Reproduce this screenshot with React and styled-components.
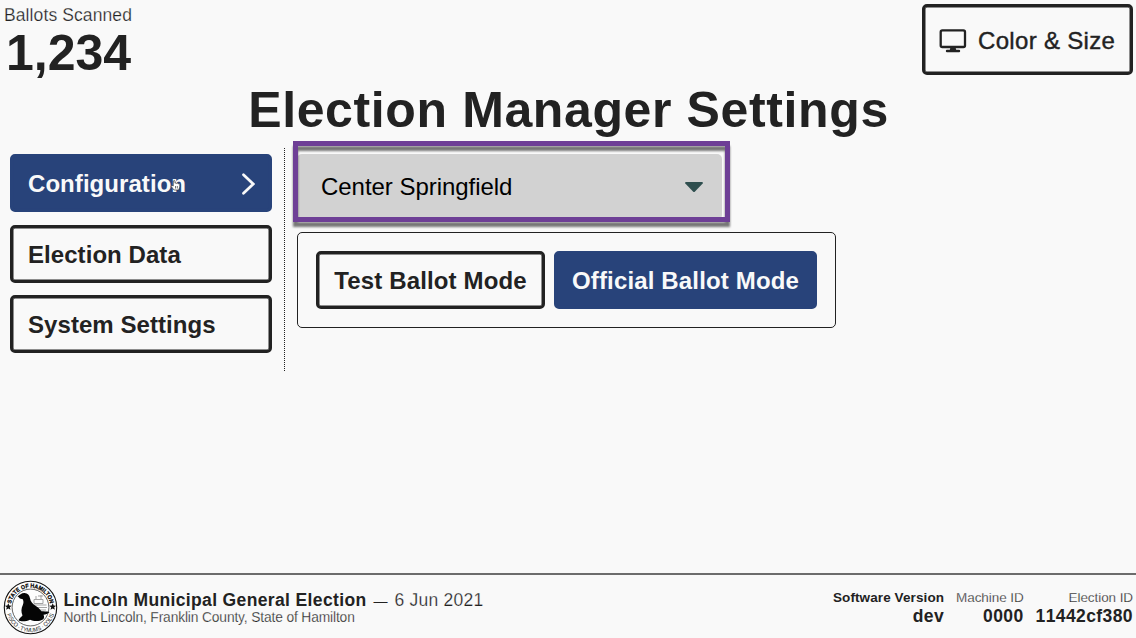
import React from "react";
import styled, { createGlobalStyle, css } from "styled-components";

const ink = "#222222";
const paper = "#f9f9f9";
const blue = "#28437a";

const GlobalStyle = createGlobalStyle`
  * { box-sizing: border-box; }
  body {
    margin: 0;
    background: ${paper};
    color: ${ink};
    font-family: "Liberation Sans", Arial, sans-serif;
    overflow: hidden;
  }
  svg { display: block; flex: none; }
`;

/* Thins the regular face so it reads as a light weight. */
const light = css`
  font-weight: 400;
  -webkit-text-stroke: 0.25px ${paper};
`;

const Screen = styled.div`
  display: flex;
  flex-direction: column;
  width: 1136px;
  height: 638px;
`;

const Header = styled.header`
  display: flex;
  justify-content: space-between;
  align-items: flex-start;
  height: 82px;
  padding: 4px 3px 0 4px;
`;

const Counter = styled.div`
  display: flex;
  flex-direction: column;
`;

const CounterLabel = styled.span`
  ${light}
  font-size: 17.5px;
  line-height: 22px;
  letter-spacing: 0.1px;
`;

const CounterValue = styled.span`
  padding-left: 2px;
  font-size: 50px;
  font-weight: 700;
  line-height: 54px;
  font-kerning: none;
`;

const ThemeButton = styled.button`
  display: flex;
  align-items: center;
  gap: 11px;
  width: 211px;
  height: 71px;
  padding: 2px 0 0 14px;
  border: 3px solid ${ink};
  border-radius: 5px;
  box-shadow: inset 0 0 0 0.5px ${ink};
  background: ${paper};
  color: ${ink};
  font: 400 24px "Liberation Sans", Arial, sans-serif;
  letter-spacing: 0.32px;
  -webkit-text-stroke: 0.4px ${ink};
  white-space: nowrap;
`;

const Title = styled.h1`
  margin: 0;
  padding-left: 1px;
  height: 66px;
  text-align: center;
  font-size: 50px;
  line-height: 56px;
  font-weight: 700;
  letter-spacing: 0.62px;
`;

const Main = styled.main`
  display: flex;
  align-items: flex-start;
  flex: 1;
  padding-left: 10px;
`;

const Nav = styled.nav`
  display: flex;
  flex-direction: column;
  gap: 12.4px;
  width: 275px;
  height: 223px;
  padding: 6.2px 12px 0 0;
  border-right: 1px dotted ${ink};
`;

const Button = styled.button`
  display: flex;
  align-items: center;
  justify-content: ${(p) => (p.$spread ? "space-between" : "center")};
  width: ${(p) => p.$width}px;
  height: 58px;
  padding: ${(p) => (p.$spread ? "2px 14px 0 15px" : "2px 0 0")};
  border: 3px solid ${(p) => (p.$primary ? blue : ink)};
  border-radius: 5px;
  box-shadow: inset 0 0 0 0.5px ${(p) => (p.$primary ? blue : ink)};
  background: ${(p) => (p.$primary ? blue : paper)};
  color: ${(p) => (p.$primary ? paper : ink)};
  font: 700 24px "Liberation Sans", Arial, sans-serif;
  letter-spacing: ${(p) => (p.$spread ? 0.06 : 0.15)}px;
  white-space: nowrap;
`;

const LabelWithPointer = styled.span`
  position: relative;
`;

const Pointer = styled.svg`
  position: absolute;
  left: 142px;
  top: 8px;
`;

const Panel = styled.section`
  display: flex;
  flex-direction: column;
  gap: 12px;
  padding: 6px 0 0 12px;
`;

const SelectFrame = styled.div`
  position: relative;
  width: 425px;
  height: 66px;
`;

const Select = styled.div`
  display: flex;
  align-items: center;
  justify-content: space-between;
  height: 100%;
  padding: 0 19px 0 24px;
  border-radius: 5px;
  background: #d2d2d2;
  color: #000;
  font-size: 24px;
  letter-spacing: -0.04px;
`;

const Highlight = styled.div`
  position: absolute;
  left: -4.5px;
  top: -13px;
  width: 437px;
  height: 81px;
  border: 5px solid #6e3f96;
  filter: drop-shadow(0 5px 1.3px rgba(0, 0, 0, 0.52));
`;

const ModeGroup = styled.div`
  display: flex;
  gap: 9px;
  width: 539px;
  height: 96px;
  padding: 18px;
  border: 1px solid ${ink};
  border-radius: 5px;
`;

const Footer = styled.footer`
  display: flex;
  align-items: center;
  height: 65px;
  padding: 2px 3px 0 3px;
  border-top: 2px solid #6c6c6c;
`;

const ElectionInfo = styled.div`
  display: flex;
  flex-direction: column;
  flex: 1;
  padding-left: 5.500px;
`;

const ElectionTitle = styled.div`
  display: flex;
  align-items: baseline;
  gap: 7px;
  font-size: 17.5px;
  line-height: 20px;
`;

const ElectionName = styled.strong`
  letter-spacing: 0.36px;
`;

const ElectionDate = styled.span`
  ${light}
  letter-spacing: 0.24px;
`;

const Dash = styled.span`
  font-size: 14px;
`;

const Place = styled.div`
  ${light}
  font-size: 13.8px;
  line-height: 14px;
  letter-spacing: -0.14px;
`;

const Facts = styled.div`
  display: flex;
  gap: 12px;
`;

const Fact = styled.div`
  display: flex;
  flex-direction: column;
  align-items: flex-end;
`;

const FactLabel = styled.span`
  ${(p) => (p.$bold ? css`font-weight: 700;` : light)}
  font-size: 13.5px;
  line-height: 16px;
  letter-spacing: ${(p) => (p.$bold ? 0.1 : -0.08)}px;
`;

const FactValue = styled.strong`
  font-size: 17.5px;
  line-height: 20px;
  letter-spacing: 0.4px;
  font-kerning: none;
`;

const MonitorIcon = () => (
  <svg width="28" height="24" viewBox="0 0 28 24" fill="none" stroke={ink}>
    <rect x="1.7" y="1.4" width="24.3" height="16.6" rx="1.6" strokeWidth="2.3" />
    <path d="M11.500 18h5l.8 3.500h-6.600z" fill={ink} stroke="none" />
    <path d="M8 22h12" strokeWidth="2.400" strokeLinecap="round" />
  </svg>
);

const ChevronIcon = () => (
  <svg width="13" height="22" viewBox="0 0 13 22" fill="none">
    <path d="M1.500 1.700 11.200 11 1.500 20.300" stroke={paper} strokeWidth="2.700" strokeLinecap="round" />
  </svg>
);

const CaretIcon = () => (
  <svg width="18" height="10" viewBox="0 0 18 10">
    <path d="M1 0h16q1.3.3.7 1.5L10 9.400q-1 1-2 0L.3 1.500Q-.3.3 1 0z" fill="#2f4f4f" />
  </svg>
);

const HandPointer = () => (
  <Pointer width="12" height="14" viewBox="0 0 12 14">
    <path
      d="M4 12 1.200 8.400q-.3-1.400 1.500-.7L3.300 8V3q.8-1.400 1.700 0v2.200q.9-.8 1.600.2.9-.7 1.600.3 1.300-.4 1.600.8v2.500L8.700 12z"
      fill="#fff"
      stroke="#333"
      strokeWidth=".7"
    />
    <path d="M5.500 8v2.500M7.300 8v2.500" stroke="#333" strokeWidth=".7" />
  </Pointer>
);

const StateSeal = () => (
  <svg width="55" height="55" viewBox="0 0 55 55">
    <defs>
      <path id="seal-top" d="M7.700 27.500a19.800 19.800 0 0 1 39.600 0" />
      <path id="seal-bottom" d="M2.900 27.500a24.600 24.600 0 0 0 49.200 0" />
    </defs>
    <circle cx="27.500" cy="27.500" r="26.200" fill="#fdfdfd" stroke="#111" strokeWidth="1.100" />
    <circle cx="27.500" cy="27.500" r="18.400" fill="none" stroke="#222" strokeWidth=".7" />
    <text fontFamily="Liberation Sans" fontWeight="700" fontSize="5.900" fill="#000" stroke="#000" strokeWidth=".25">
      <textPath href="#seal-top" startOffset="50%" textAnchor="middle" textLength="54" lengthAdjust="spacingAndGlyphs">
        STATE OF HAMILTON
      </textPath>
    </text>
    <text fontFamily="Liberation Sans" fontSize="6" fill="#222">
      <textPath href="#seal-bottom" startOffset="50%" textAnchor="middle" textLength="63" lengthAdjust="spacingAndGlyphs">
        PISCO · TYMUMS · COLIS
      </textPath>
    </text>
    <path d="m5.300 23.300 1 2.300 2.500.1-2 1.600.7 2.500-2.200-1.400-2.200 1.400.7-2.500-2-1.600 2.500-.1z" fill="#111" />
    <path d="m49.700 23.300 1 2.300 2.500.1-2 1.600.7 2.500-2.200-1.400-2.200 1.400.7-2.500-2-1.600 2.500-.1z" fill="#111" />
    <path d="M31 19.500h9v4h-9zM29.500 25h14M32 27.500h12M34 30h9M33 19v-3M38 19v-4M35 16h5" fill="none" stroke="#999" strokeWidth=".9" />
    <path
      d="M14.500 16.500c2.200-1.600 4-3.600 7-3.500 3.300.2 4.800 2 5.500 5.200.7 3.600 2.500 5.300 5.500 7.500 2.600 1.800 4.300 3.300 6 5.500 2.200.3 5-.2 8 .7-1.700 1.800-3.700 2.600-6 2.900.8 1.500.8 3.200-.2 4.500-4 2.500-9.800 2.200-13.300.4-3.500 1.500-8.500 2.500-11.500.5 1-2.200 3-3.400 4-4.700-1.500-3.500-1.500-7 .5-11 .8-2 .6-4-.5-5.600-1.500.3-3.200-.5-4-1.900z"
      fill="#050505"
    />
  </svg>
);

export default function App() {
  return (
    <Screen>
      <GlobalStyle />
      <Header>
        <Counter>
          <CounterLabel>Ballots Scanned</CounterLabel>
          <CounterValue>1,234</CounterValue>
        </Counter>
        <ThemeButton>
          <MonitorIcon />
          Color &amp; Size
        </ThemeButton>
      </Header>
      <Title>Election Manager Settings</Title>
      <Main>
        <Nav>
          <Button $primary $spread $width={262}>
            <LabelWithPointer>
              Configuration
              <HandPointer />
            </LabelWithPointer>
            <ChevronIcon />
          </Button>
          <Button $spread $width={262}>Election Data</Button>
          <Button $spread $width={262}>System Settings</Button>
        </Nav>
        <Panel>
          <SelectFrame>
            <Select>
              Center Springfield
              <CaretIcon />
            </Select>
            <Highlight />
          </SelectFrame>
          <ModeGroup>
            <Button $width={229}>Test Ballot Mode</Button>
            <Button $primary $width={263}>Official Ballot Mode</Button>
          </ModeGroup>
        </Panel>
      </Main>
      <Footer>
        <StateSeal />
        <ElectionInfo>
          <ElectionTitle>
            <ElectionName>Lincoln Municipal General Election</ElectionName>
            <Dash>—</Dash>
            <ElectionDate>6 Jun 2021</ElectionDate>
          </ElectionTitle>
          <Place>North Lincoln, Franklin County, State of Hamilton</Place>
        </ElectionInfo>
        <Facts>
          <Fact>
            <FactLabel $bold>Software Version</FactLabel>
            <FactValue>dev</FactValue>
          </Fact>
          <Fact>
            <FactLabel>Machine ID</FactLabel>
            <FactValue>0000</FactValue>
          </Fact>
          <Fact>
            <FactLabel>Election ID</FactLabel>
            <FactValue>11442cf380</FactValue>
          </Fact>
        </Facts>
      </Footer>
    </Screen>
  );
}
